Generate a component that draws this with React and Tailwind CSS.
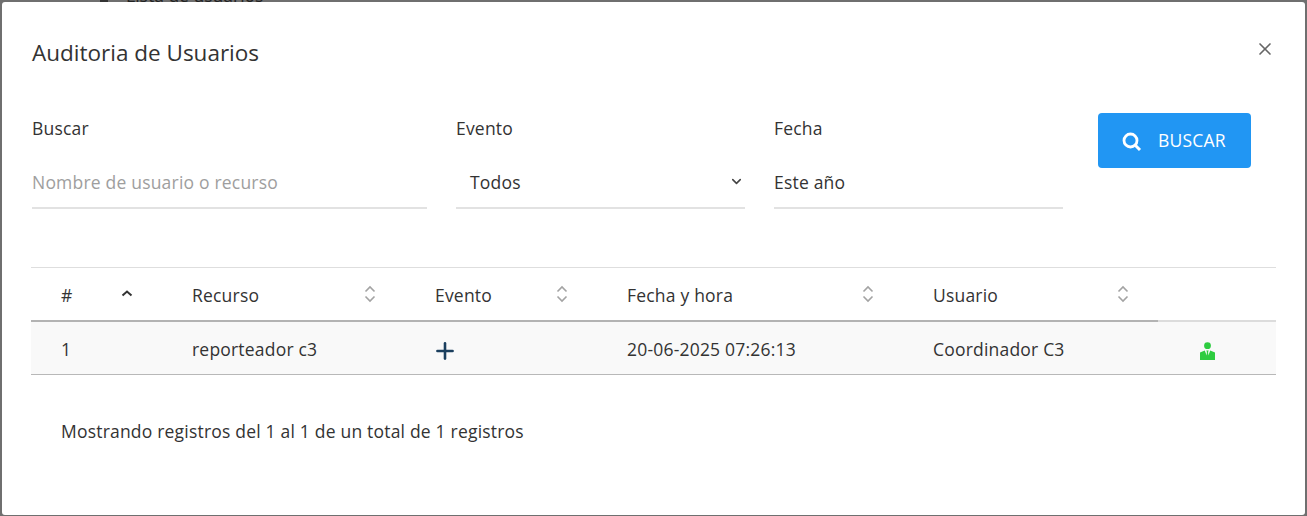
import React from "react";
import { X, ChevronDown, Plus } from "lucide-react";

const font = "font-['Open_Sans','Noto_Sans',sans-serif]";

const SortIcon = ({ active }) =>
  active ? (
    <svg width="14" height="14" viewBox="0 0 14 14" fill="none" className="shrink-0">
      <path d="M2.500 8.500 7 4.500l4.500 4" stroke="#333" strokeWidth="2" />
    </svg>
  ) : (
    <svg width="14" height="20" viewBox="0 0 14 20" fill="none" className="shrink-0">
      <path d="M2.500 7.500 7 3l4.500 4.500M2.500 12.500 7 17l4.500-4.500" stroke="#a3a3a3" strokeWidth="1.600" />
    </svg>
  );

const UserIcon = () => (
  <svg width="15" height="18" viewBox="0 0 15 18" fill="#2ecc40">
    <circle cx="7.500" cy="3.700" r="3.400" />
    <path d="M0 18V10.500L4.800 8.600 6.600 13.500 6.900 10 6.300 8.500H8.700L8.100 10 8.400 13.500 10.200 8.600 15 10.500V18Z" />
  </svg>
);

const Th = ({ children, w, active }) => (
  <th className={`${w} h-[53px] border-b-2 border-[#b3b3b3] p-0 font-normal`}>
    <div className="flex items-center justify-between pl-[30px] pr-[28px]">
      <span className="pt-[2px]">{children}</span>
      <SortIcon active={active} />
    </div>
  </th>
);

export default function App() {
  return (
    <div className={`h-[516px] w-[1307px] overflow-hidden bg-[#6f6f6f] ${font}`}>
      <div className="flex h-[2px] items-start overflow-hidden pl-[100px]">
        <span className="h-[2px] w-[8px] bg-[#333]" />
        <div className="ml-[18px] mt-[-15px] text-[17.500px] leading-[20px] text-[#222]">Lista de usuarios</div>
      </div>
      <div className="ml-[2px] h-[513px] w-[1303px] rounded-[3px] bg-white pl-[29px] pr-[29px] text-[#333]">
        <div className="flex h-[96px] items-start justify-between">
          <h1 className="ml-[1px] mt-[33px] text-[22.500px] leading-[36px] text-[#333]">Auditoria de Usuarios</h1>
          <X className="mr-[1px] mt-[37px] text-[#666]" size={20} strokeWidth={2} />
        </div>

        <div className="flex h-[169px] items-start gap-[29px] pl-[1px] text-[17.500px] tracking-[0.2px]">
          <div className="flex w-[395px] flex-col">
            <label className="mt-[17px] h-[26px] leading-[26px]">Buscar</label>
            <div className="mt-[16px] flex h-[52px] items-center border-b-2 border-[#e2e2e2] pt-[1px] text-[#9e9e9e]">
              Nombre de usuario o recurso
            </div>
          </div>
          <div className="flex w-[289px] flex-col">
            <label className="mt-[17px] h-[26px] leading-[26px]">Evento</label>
            <div className="mt-[16px] flex h-[52px] items-center justify-between border-b-2 border-[#e2e2e2] pl-[14px] pr-[1px] pt-[1px]">
              <span>Todos</span>
              <ChevronDown size={15} strokeWidth={2.500} className="mb-[2px] text-[#444]" />
            </div>
          </div>
          <div className="flex w-[289px] flex-col">
            <label className="mt-[17px] h-[26px] leading-[26px]">Fecha</label>
            <div className="mt-[16px] flex h-[52px] items-center border-b-2 border-[#e2e2e2] pt-[1px]">Este año</div>
          </div>
          <button className="ml-[6px] mt-[15px] flex h-[55px] w-[153px] items-center rounded-[4px] bg-[#2196f3] pl-[24px] text-white">
            <svg width="20" height="20" viewBox="0 0 20 20" fill="none" stroke="white" className="mt-[3px] shrink-0">
              <circle cx="8.500" cy="8.500" r="6.500" strokeWidth="2.800" />
              <path d="M13.500 13.500 18 18" strokeWidth="3" />
            </svg>
            <span className="ml-[16px]">BUSCAR</span>
          </button>
        </div>

        <table className="w-[1245px] table-fixed border-collapse border-t border-[#dedede] text-left text-[17.500px] tracking-[0.2px]">
          <thead>
            <tr>
              <Th w="w-[131px]" active>#</Th>
              <Th w="w-[243px]">Recurso</Th>
              <Th w="w-[192px]">Evento</Th>
              <Th w="w-[306px]">Fecha y hora</Th>
              <Th w="w-[255px]">Usuario</Th>
              <th className="border-b-2 border-[#dcdcdc] p-0" />
            </tr>
          </thead>
          <tbody>
            <tr className="h-[54px] border-b border-[#b8b8b8] bg-[#f9f9f9]">
              <td className="p-0 pl-[30px] pt-[3px]">1</td>
              <td className="p-0 pl-[30px] pt-[3px]">reporteador c3</td>
              <td className="p-0 pl-[27px] pt-[6px] text-[#1b3f5e]">
                <Plus size={26} strokeWidth={2.400} />
              </td>
              <td className="p-0 pl-[30px] pt-[3px]">20-06-2025 07:26:13</td>
              <td className="p-0 pl-[30px] pt-[3px]">Coordinador C3</td>
              <td className="p-0 pl-[42px] pt-[7px]">
                <UserIcon />
              </td>
            </tr>
          </tbody>
        </table>

        <p className="mt-[44px] pl-[30px] text-[17.500px] leading-[24px] tracking-[0.2px]">
          Mostrando registros del 1 al 1 de un total de 1 registros
        </p>
      </div>
    </div>
  );
}
